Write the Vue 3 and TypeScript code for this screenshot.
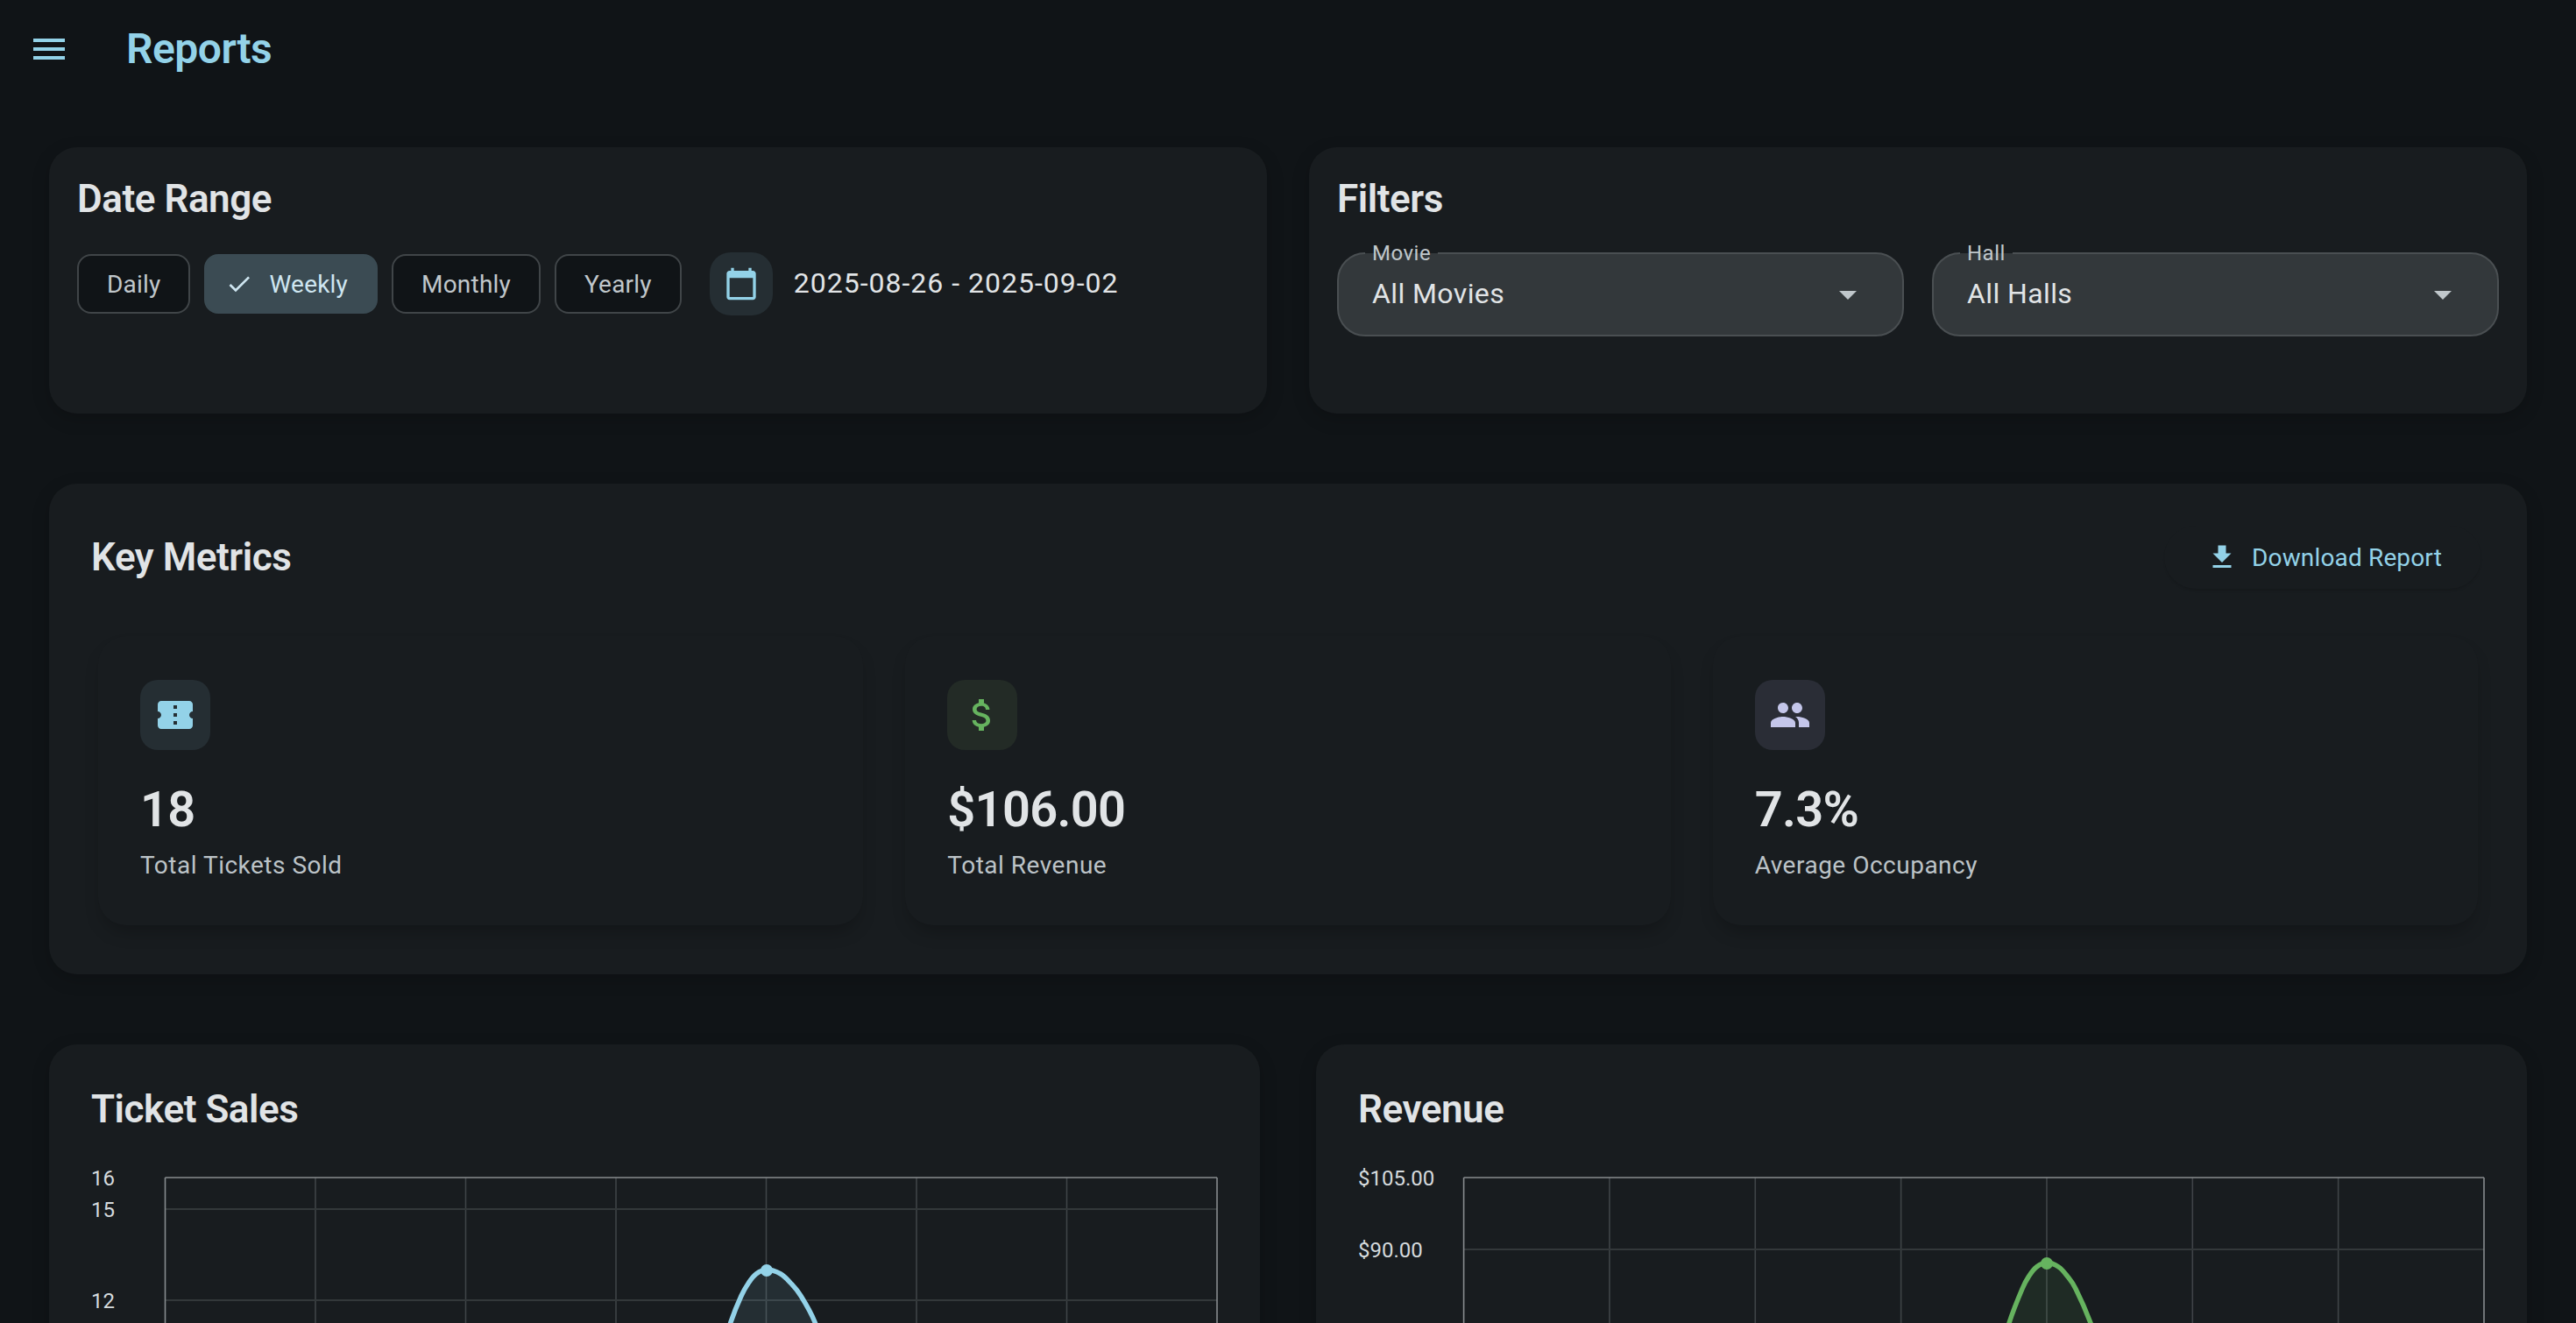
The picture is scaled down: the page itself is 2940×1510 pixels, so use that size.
<template>
  <div class="page">
    <header class="topbar">
      <svg class="menu-icon" viewBox="0 0 24 24" width="48" height="48"><path d="M3 18h18v-2H3v2zm0-5h18v-2H3v2zm0-7v2h18V6H3z" /></svg>
      <h1 class="page-title">Reports</h1>
    </header>

    <main class="content">
      <div class="row row-top">
        <section class="card small-card">
          <h2 class="card-title">Date Range</h2>
          <div class="range-row">
            <button v-for="r in ranges" :key="r" class="chip" :class="{ selected: r === selectedRange }">
              <svg v-if="r === selectedRange" viewBox="0 0 24 24" width="32" height="32"><path d="M9 16.17L4.83 12l-1.41 1.41L9 19 21 7l-1.41-1.41z" /></svg>
              {{ r }}
            </button>
            <button class="cal-btn">
              <svg viewBox="0 0 24 24" width="40" height="40"><path d="M20 3h-1V1h-2v2H7V1H5v2H4c-1.1 0-2 .9-2 2v16c0 1.1.9 2 2 2h16c1.1 0 2-.9 2-2V5c0-1.1-.9-2-2-2zm0 18H4V8h16v13z" /></svg>
            </button>
            <span class="date-text">2025-08-26 - 2025-09-02</span>
          </div>
        </section>

        <section class="card small-card">
          <h2 class="card-title">Filters</h2>
          <div class="filter-row">
            <div v-for="f in filters" :key="f.label" class="select">
              <span class="select-label">{{ f.label }}</span>
              <span class="select-value">{{ f.value }}</span>
              <svg viewBox="0 0 24 24" width="48" height="48"><path d="M7 10l5 5 5-5z" /></svg>
            </div>
          </div>
        </section>
      </div>

      <section class="card metrics">
        <div class="metrics-head">
          <h2 class="card-title">Key Metrics</h2>
          <button class="download">
            <svg viewBox="0 0 24 24" width="36" height="36"><path d="M19 9h-4V3H9v6H5l7 7 7-7zM5 18v2h14v-2H5z" /></svg>
            Download Report
          </button>
        </div>
        <div class="stat-grid">
          <div v-for="s in stats" :key="s.label" class="stat">
            <div class="stat-icon" :class="s.tone">
              <svg viewBox="0 0 24 24" width="48" height="48"><path :d="s.icon" /></svg>
            </div>
            <div class="stat-value">{{ s.value }}</div>
            <div class="stat-label">{{ s.label }}</div>
          </div>
        </div>
      </section>

      <div class="row row-charts">
        <section v-for="c in charts" :key="c.title" class="card chart-card">
          <h2 class="card-title">{{ c.title }}</h2>
          <svg class="chart" width="1286" height="190">
            <line v-for="(x, i) in c.verticals" :key="i" :x1="x" :x2="x" y1="14" y2="190" class="grid-v" />
            <line v-for="t in c.ticks.slice(1)" :key="t.label" :x1="c.left" :x2="c.right" :y1="t.y" :y2="t.y" class="grid-h" />
            <text v-for="t in c.ticks" :key="t.label" x="0" :y="t.y + 9" class="tick">{{ t.label }}</text>
            <path :d="c.area" :fill="c.fill" />
            <path :d="c.line" fill="none" :stroke="c.color" stroke-width="5.5" />
            <circle :cx="c.dot[0]" :cy="c.dot[1]" r="7" :fill="c.color" />
            <line :x1="c.left" :x2="c.right" y1="14" y2="14" class="border" />
            <line :x1="c.left" :x2="c.left" y1="14" y2="190" class="border" />
            <line :x1="c.right" :x2="c.right" y1="14" y2="190" class="border" />
          </svg>
        </section>
      </div>
    </main>
  </div>
</template>

<script setup lang="ts">
type Pt = [number, number];

const ranges = ['Daily', 'Weekly', 'Monthly', 'Yearly'];
const selectedRange = 'Weekly';

const filters = [
  { label: 'Movie', value: 'All Movies' },
  { label: 'Hall', value: 'All Halls' },
];

const stats = [
  {
    label: 'Total Tickets Sold',
    value: '18',
    tone: 'blue',
    icon: 'M22 10V6c0-1.11-.9-2-2-2H4c-1.1 0-1.99.89-1.99 2v4c1.1 0 1.99.9 1.99 2s-.89 2-2 2v4c0 1.1.9 2 2 2h16c1.1 0 2-.9 2-2v-4c-1.1 0-2-.9-2-2s.9-2 2-2zm-9 7.5h-2v-2h2v2zm0-4.5h-2v-2h2v2zm0-4.5h-2v-2h2v2z',
  },
  {
    label: 'Total Revenue',
    value: '$106.00',
    tone: 'green',
    icon: 'M11.8 10.9c-2.27-.59-3-1.2-3-2.15 0-1.09 1.01-1.85 2.7-1.85 1.78 0 2.44.85 2.5 2.1h2.21c-.07-1.72-1.12-3.3-3.21-3.81V3h-3v2.16c-1.94.42-3.5 1.68-3.5 3.61 0 2.31 1.91 3.46 4.7 4.13 2.5.6 3 1.48 3 2.41 0 .69-.49 1.79-2.7 1.79-2.06 0-2.87-.92-2.98-2.1h-2.2c.12 2.19 1.76 3.42 3.68 3.83V21h3v-2.15c1.95-.37 3.5-1.5 3.5-3.55 0-2.84-2.43-3.81-4.7-4.4z',
  },
  {
    label: 'Average Occupancy',
    value: '7.3%',
    tone: 'violet',
    icon: 'M16 11c1.66 0 2.99-1.34 2.99-3S17.66 5 16 5c-1.66 0-3 1.34-3 3s1.34 3 3 3zm-8 0c1.66 0 2.99-1.34 2.99-3S9.66 5 8 5C6.34 5 5 6.34 5 8s1.34 3 3 3zm0 2c-2.33 0-7 1.17-7 3.5V19h14v-2.5c0-2.33-4.67-3.5-7-3.5zm8 0c-.29 0-.62.02-.97.05 1.16.84 1.97 1.97 1.97 3.45V19h6v-2.5c0-2.33-4.67-3.5-7-3.5z',
  },
];

// catmull-rom through the points, close enough to the chart's curved line
function smooth(pts: Pt[]): string {
  let d = `M${pts[0][0]} ${pts[0][1]}`;
  for (let i = 0; i < pts.length - 1; i++) {
    const p0 = pts[Math.max(i - 1, 0)];
    const p1 = pts[i];
    const p2 = pts[i + 1];
    const p3 = pts[Math.min(i + 2, pts.length - 1)];
    const c1x = p1[0] + (p2[0] - p0[0]) / 6;
    const c1y = p1[1] + (p2[1] - p0[1]) / 6;
    const c2x = p2[0] - (p3[0] - p1[0]) / 6;
    const c2y = p2[1] - (p3[1] - p1[1]) / 6;
    d += ` C${c1x} ${c1y} ${c2x} ${c2y} ${p2[0]} ${p2[1]}`;
  }
  return d;
}

function buildChart(
  title: string,
  left: number,
  color: string,
  fill: string,
  ticks: { label: string; y: number }[],
  pts: Pt[],
  dot: Pt,
) {
  const right = 1285;
  const step = (right - left) / 7;
  const line = smooth(pts);
  return {
    title,
    left,
    right,
    color,
    fill,
    ticks,
    dot,
    line,
    area: `${line} Z`,
    verticals: Array.from({ length: 6 }, (_, i) => left + step * (i + 1)),
  };
}

const charts = [
  buildChart(
    'Ticket Sales',
    84.5,
    '#93d2e8',
    'rgba(147, 210, 232, 0.1)',
    [
      { label: '16', y: 14 },
      { label: '15', y: 50 },
      { label: '12', y: 154 },
    ],
    [[718, 219], [730, 179], [742, 149], [750.5, 134], [759, 124], [771, 119], [787, 124], [798, 134], [810, 149], [826, 179], [838, 219]],
    [771, 120],
  ),
  buildChart(
    'Revenue',
    120.6,
    '#66b35f',
    'rgba(102, 179, 95, 0.1)',
    [
      { label: '$105.00', y: 14 },
      { label: '$90.00', y: 96 },
    ],
    [[732, 221], [743, 180], [758, 141], [766, 126], [774.4, 116], [786, 111], [799.5, 116], [809, 126], [819, 141], [836, 180], [849, 221]],
    [786, 112],
  ),
];
</script>

<style>
html,
body {
  margin: 0;
  background: #101417;
}
</style>

<style scoped>
.page {
  width: 2940px;
  height: 1510px;
  overflow: hidden;
  background: #101417;
  font-family: Roboto, "Liberation Sans", sans-serif;
  color: #e1e4e6;
}

.topbar {
  display: flex;
  align-items: center;
  height: 112px;
  padding-left: 32px;
  box-sizing: border-box;
  gap: 64px;
}

.menu-icon {
  fill: #93d2e8;
}

.page-title {
  margin: 0 0 2px;
  font-size: 48px;
  font-weight: 600;
  letter-spacing: -0.5px;
  color: #93d2e8;
}

.content {
  display: flex;
  flex-direction: column;
  gap: 80px;
  padding: 56px 56px 0;
}

.row {
  display: flex;
}

.row-top {
  gap: 48px;
}

.row-charts {
  gap: 64px;
}

.card {
  flex: 1;
  box-sizing: border-box;
  background: #181c1f;
  border-radius: 32px;
  box-shadow: 0 6px 20px rgba(0, 0, 0, 0.18);
}

.card-title {
  margin: 0;
  font-size: 44px;
  line-height: 52px;
  font-weight: 600;
  letter-spacing: -0.45px;
  color: #e1e4e6;
}

.small-card {
  height: 304px;
  padding: 33px 32px 32px;
}

.range-row {
  display: flex;
  align-items: center;
  gap: 16px;
  margin-top: 35px;
}

.chip {
  display: flex;
  align-items: center;
  gap: 18px;
  height: 68px;
  padding: 0 32px;
  box-sizing: border-box;
  border: 2px solid #404548;
  border-radius: 16px;
  background: #101417;
  font: 400 28px Roboto, sans-serif;
  letter-spacing: 0.2px;
  color: #c0c7cb;
}

.chip.selected {
  padding-left: 22px;
  border-color: #3b4b53;
  background: #3b4b53;
  color: #cfe6f1;
}

.chip svg {
  fill: #cfe6f1;
}

.cal-btn {
  display: flex;
  align-items: center;
  justify-content: center;
  width: 72px;
  height: 72px;
  margin-left: 16px;
  padding: 0;
  border: none;
  border-radius: 24px;
  background: #252e33;
}

.cal-btn svg {
  fill: #93d2e8;
}

.date-text {
  margin: 0 0 3px 8px;
  font-size: 32px;
  letter-spacing: 1px;
  color: #e1e4e6;
}

.filter-row {
  display: flex;
  gap: 32px;
  margin-top: 35px;
}

.select {
  position: relative;
  flex: 1;
  display: flex;
  align-items: center;
  justify-content: space-between;
  height: 96px;
  padding: 0 38px 0 38px;
  box-sizing: border-box;
  border: 2px solid #4a4f52;
  border-radius: 32px;
  background: #33383b;
}

.select svg {
  fill: #c0c7cb;
}

.select-label {
  position: absolute;
  left: 30px;
  top: -15px;
  padding: 0 8px;
  font-size: 24px;
  line-height: 28px;
  letter-spacing: 0.5px;
  color: #c0c7cb;
  background: linear-gradient(#181c1f 50%, #33383b 50%);
}

.select-value {
  margin-bottom: 3px;
  font-size: 32px;
  letter-spacing: 0.4px;
  color: #e1e4e6;
}

.metrics {
  padding: 48px;
}

.metrics-head {
  display: flex;
  align-items: center;
  justify-content: space-between;
  height: 72px;
}

.download {
  display: flex;
  align-items: center;
  gap: 16px;
  height: 72px;
  margin-right: 4px;
  padding: 0 45px 0 48px;
  border: none;
  border-radius: 36px;
  background: #181c1f;
  box-shadow: 0 3px 3px -1px rgba(0, 0, 0, 0.12);
  font: 400 28px Roboto, sans-serif;
  letter-spacing: 0.15px;
  color: #93d2e8;
}

.download svg {
  fill: #93d2e8;
}

.stat-grid {
  display: grid;
  grid-template-columns: repeat(3, 1fr);
  gap: 48px;
  margin-top: 54px;
  padding: 0 8px 8px;
}

.stat {
  height: 330px;
  padding: 50px 48px 0;
  box-sizing: border-box;
  background: #181c1f;
  border-radius: 32px;
  box-shadow: 0 12px 20px -5px rgba(0, 0, 0, 0.24);
}

.stat-icon {
  display: flex;
  align-items: center;
  justify-content: center;
  width: 80px;
  height: 80px;
  border-radius: 20px;
}

.stat-icon.blue {
  background: #252e33;
  fill: #93d2e8;
}

.stat-icon.green {
  background: #232b26;
  fill: #66b35f;
}

.stat-icon.violet {
  background: #2a2d36;
  fill: #c4c6ea;
}

.stat-value {
  margin-top: 36px;
  font-size: 56px;
  line-height: 64px;
  font-weight: 600;
  letter-spacing: -0.7px;
  color: #e1e4e6;
}

.stat-label {
  margin-top: 14px;
  font-size: 28px;
  line-height: 36px;
  letter-spacing: 0.5px;
  color: #bcc3c7;
}

.chart-card {
  height: 600px;
  padding: 48px;
}

.chart {
  display: block;
  margin-top: 38px;
}

.grid-v {
  stroke: #3f4447;
  stroke-width: 1.6;
}

.grid-h {
  stroke: #33383a;
  stroke-width: 2;
}

.border {
  stroke: #888c8f;
  stroke-width: 1.6;
}

.tick {
  font-size: 24px;
  fill: #d5dadd;
}
</style>
